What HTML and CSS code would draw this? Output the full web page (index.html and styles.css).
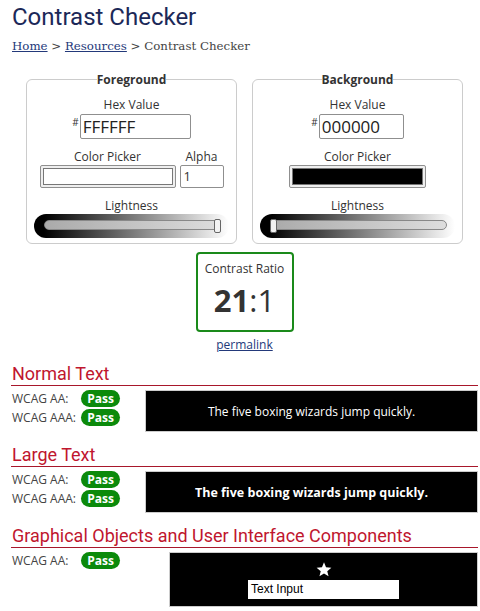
FILE: index.html
```html
<!DOCTYPE html>
<html lang="en">
<head>
<meta charset="utf-8">
<title>Contrast Checker</title>
<link rel="stylesheet" href="styles.css">
</head>
<body>
<main class="page">
  <h1 class="title">Contrast Checker</h1>
  <nav class="crumbs"><a href="#">Home</a> &gt; <a href="#">Resources</a> &gt; Contrast Checker</nav>

  <div class="pickers">
    <fieldset class="panel">
      <legend>Foreground</legend>
      <div class="lbl">Hex Value</div>
      <div class="hexrow"><span class="hash">#</span><div class="hexin hex-fg">FFFFFF</div></div>
      <div class="pickrow">
        <div class="col">
          <div class="lbl">Color Picker</div>
          <div class="swatch sw-fg"><div class="swatch-in white"></div></div>
        </div>
        <div class="col">
          <div class="lbl">Alpha</div>
          <div class="alpha">1</div>
        </div>
      </div>
      <div class="lbl light-lbl">Lightness</div>
      <div class="slider"><div class="track end"><div class="thumb"></div></div></div>
    </fieldset>

    <fieldset class="panel">
      <legend>Background</legend>
      <div class="lbl">Hex Value</div>
      <div class="hexrow"><span class="hash">#</span><div class="hexin hex-bg">000000</div></div>
      <div class="pickrow">
        <div class="col">
          <div class="lbl">Color Picker</div>
          <div class="swatch sw-bg"><div class="swatch-in black"></div></div>
        </div>
      </div>
      <div class="lbl light-lbl">Lightness</div>
      <div class="slider"><div class="track start"><div class="thumb"></div></div></div>
    </fieldset>
  </div>

  <div class="ratio">
    <div class="ratio-lbl">Contrast Ratio</div>
    <div class="ratio-val"><b>21</b>:1</div>
  </div>
  <div class="perma"><a href="#">permalink</a></div>

  <section class="result">
    <h2>Normal Text</h2>
    <div class="rrow">
      <div class="verdicts">
        <div class="v"><span class="vl">WCAG AA:</span><span class="pass">Pass</span></div>
        <div class="v"><span class="vl">WCAG AAA:</span><span class="pass">Pass</span></div>
      </div>
      <div class="sample">The five boxing wizards jump quickly.</div>
    </div>
  </section>

  <section class="result">
    <h2>Large Text</h2>
    <div class="rrow">
      <div class="verdicts">
        <div class="v"><span class="vl">WCAG AA:</span><span class="pass">Pass</span></div>
        <div class="v"><span class="vl">WCAG AAA:</span><span class="pass">Pass</span></div>
      </div>
      <div class="sample large">The five boxing wizards jump quickly.</div>
    </div>
  </section>

  <section class="result">
    <h2>Graphical Objects and User Interface Components</h2>
    <div class="rrow">
      <div class="verdicts wide">
        <div class="v"><span class="vl">WCAG AA:</span><span class="pass">Pass</span></div>
      </div>
      <div class="sample gfx">
        <svg class="star" width="16" height="15" viewBox="0 0 24 23"><path d="M12 0.5l3.1 7.6 8.2 0.6-6.3 5.3 2 8-7-4.4-7 4.4 2-8-6.3-5.3 8.2-0.6z" fill="#fff"/></svg>
        <div class="tinput">Text Input</div>
      </div>
    </div>
  </section>
</main>
</body>
</html>
```
FILE: styles.css
```css
html, body { margin: 0; padding: 0; background: #fff; }
body { font-family: "Open Sans", sans-serif; font-size: 12px; color: #333; }
.page { width: 467px; margin-left: 11px; }

.title {
  margin: 3px 0 0 1px;
  font-family: Roboto, sans-serif;
  font-weight: 400;
  font-size: 24px;
  line-height: 28px;
  color: #1b2858;
}
.crumbs {
  margin: 7px 0 0 1px;
  font-family: "DejaVu Serif", serif;
  font-size: 11.8px;
  line-height: 16px;
  color: #444;
}
.crumbs a { color: #23397a; }

.pickers { display: flex; justify-content: center; gap: 15px; margin-top: 17px; }
.panel {
  margin: 0;
  width: 210px;
  box-sizing: border-box;
  border: 1px solid #ccc;
  border-radius: 6px;
  padding: 9px 7px 5px 7px;
  display: flex;
  flex-direction: column;
  align-items: center;
}
.panel legend {
  margin: 0 auto;
  padding: 0;
  font-weight: 700;
  font-size: 12px;
  line-height: 17px;
  color: #333;
}
.lbl { font-size: 12px; line-height: 16px; text-align: center; color: #333; }
.hexrow { display: flex; align-items: flex-start; margin-top: 1px; }
.hash { font-size: 10px; line-height: 12px; margin-top: 2px; margin-right: 1px; }
.hexin {
  height: 25px; box-sizing: border-box;
  border: 1px solid #8f8f8f; border-radius: 2px;
  padding-left: 2px;
  font-size: 17px; line-height: 23px; color: #222;
}
.hex-fg { width: 111px; }
.hex-bg { width: 85px; }

.pickrow { display: flex; gap: 4px; margin-top: 10px; }
.col { display: flex; flex-direction: column; align-items: center; }
.swatch {
  height: 23px; box-sizing: border-box;
  border: 1px solid #8f8f8f; border-radius: 2px;
  background: #efefef;
  padding: 2px 2px;
}
.sw-fg { width: 136px; }
.sw-bg { width: 137px; }
.swatch-in { height: 100%; box-sizing: border-box; border: 1px solid #777; }
.white { background: #fff; }
.black { background: #000; }
.alpha {
  width: 44px; height: 23px; box-sizing: border-box;
  border: 1px solid #8f8f8f; border-radius: 2px;
  padding-left: 3px; font-size: 13px; line-height: 21px; color: #333;
}
.light-lbl { margin-top: 10px; }
.slider {
  width: 195px; height: 24px; box-sizing: border-box;
  border-radius: 12px;
  background: linear-gradient(to right, #000 0%, #000 5%, #fff 100%);
  padding: 6px 8px 0 10px;
}
.track {
  position: relative;
  height: 10px; box-sizing: border-box;
  border: 1px solid #888; border-radius: 5px;
  background: linear-gradient(to right, #aaa, #ddd);
}
.thumb {
  position: absolute; top: -2px;
  width: 7px; height: 14px; box-sizing: border-box;
  border: 1px solid #666; border-radius: 2px;
  background: #f2f2f2;
}
.end .thumb { right: -1px; }
.start .thumb { left: -1px; }

.ratio {
  width: 98px; height: 80px; box-sizing: border-box;
  margin: 8px auto 0;
  border: 2px solid #1a8a1a; border-radius: 4px;
  text-align: center;
}
.ratio-lbl { font-size: 12px; line-height: 16px; margin-top: 7px; color: #333; }
.ratio-val { font-size: 31px; line-height: 40px; margin-top: 3px; color: #333; }
.ratio-val b { font-weight: 700; }
.perma { text-align: center; margin-top: 5px; font-size: 12px; line-height: 16px; }
.perma a { color: #23397a; }

.result h2 {
  margin: 0;
  font-family: Roboto, sans-serif;
  font-weight: 400;
  font-size: 18px;
  line-height: 21px;
  color: #c0162e;
  padding-left: 1px;
  border-bottom: 1px solid #a8172b;
  padding-bottom: 1px;
}
.result { margin-top: 12px; }
.result:first-of-type { margin-top: 10px; }
.rrow { display: flex; margin-top: 3px; }
.verdicts { width: 134px; flex: none; }
.verdicts.wide { width: 158px; }
.v { display: flex; align-items: center; height: 19px; padding-left: 1px; }
.vl { width: 69px; color: #444; font-size: 12px; }
.pass {
  display: inline-block;
  width: 39px; height: 17px; box-sizing: border-box;
  border-radius: 9px;
  background: #0b8a0b;
  color: #fff; font-weight: 700; font-size: 12px; line-height: 17px;
  text-align: center;
}
.sample {
  flex: 1;
  height: 42px; box-sizing: border-box;
  margin-top: 1px;
  border: 1px solid #ccc;
  background: #000;
  color: #fff;
  display: flex; align-items: center; justify-content: center;
  font-size: 12px;
}
.sample.large { font-weight: 700; font-size: 12.5px; }
.sample.gfx {
  height: 55px;
  flex-direction: column;
  justify-content: flex-start;
  padding-top: 9px;
}
.star { display: block; }
.tinput {
  margin-top: 3px;
  width: 151px; height: 19px; box-sizing: border-box;
  background: #fff; color: #000;
  font-family: "Liberation Sans", Arial, sans-serif;
  font-size: 12px; line-height: 19px;
  padding-left: 3px;
}
```
